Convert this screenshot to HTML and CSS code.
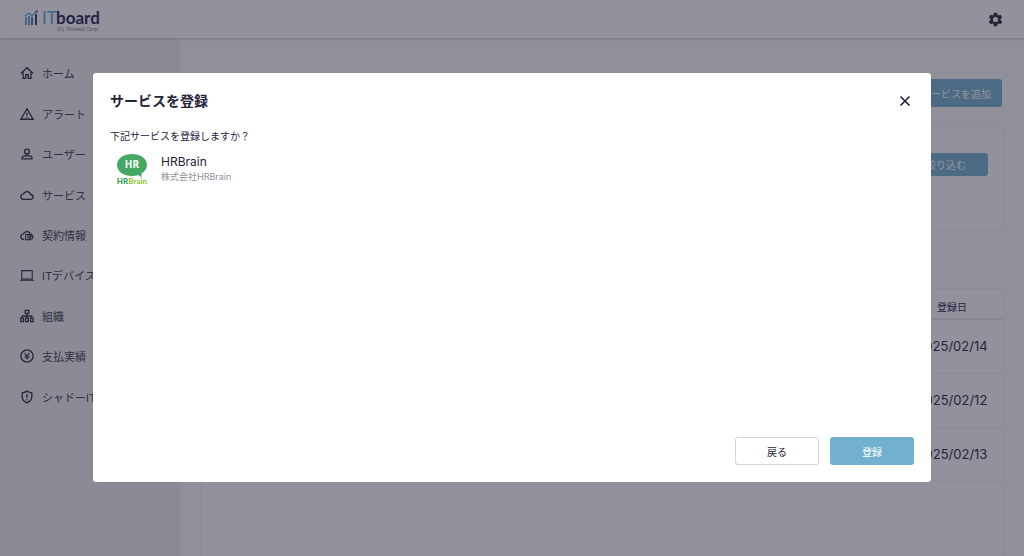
FILE: index.html
```html
<!DOCTYPE html>
<html lang="ja">
<head>
  <meta charset="UTF-8" />
  <meta name="viewport" content="width=device-width, initial-scale=1.0" />
  <title>ITboard</title>
  <link rel="stylesheet" href="styles.css">
</head>
<body>

  <header class="header">
    <a class="logo" href="#" aria-label="ITboard">
      <svg width="78" height="28" viewBox="0 0 78 28">
        <g fill="#5fa9cb">
          <rect x="1" y="12" width="2" height="8" />
          <rect x="4" y="11" width="2" height="9" />
        </g>
        <rect x="7" y="12" width="2" height="8" fill="#4d78ad" />
        <rect x="11" y="9" width="2" height="11" fill="#39377a" />
        <path d="M1 11l4-3 3 3 5-5" fill="none" stroke="#5fa9cb" stroke-width="1.3" />
        <circle cx="12.600" cy="6.500" r="1.200" fill="#4d78ad" />
        <text class="logo-it" x="18" y="19">IT</text>
        <text class="logo-board" x="32" y="19">board</text>
        <text class="logo-corp" x="33" y="26">(C)  ITcrowd Corp.</text>
      </svg>
    </a>
    <button class="icon-button" aria-label="設定">
      <svg width="17" height="17" viewBox="0 0 24 24" fill="currentColor">
        <path d="M19.14 12.94c.04-.3.06-.61.06-.94s-.02-.64-.07-.94l2.03-1.58a.49.49 0 0 0 .12-.61l-1.92-3.32a.49.49 0 0 0-.59-.22l-2.39.96a7 7 0 0 0-1.62-.94l-.36-2.54a.48.48 0 0 0-.48-.41h-3.84a.48.48 0 0 0-.47.41l-.36 2.54c-.59.24-1.13.57-1.62.94l-2.39-.96a.48.48 0 0 0-.59.22L2.74 8.87a.48.48 0 0 0 .12.61l2.03 1.58c-.05.3-.09.63-.09.94s.02.64.07.94l-2.03 1.58a.49.49 0 0 0-.12.61l1.92 3.32c.12.22.37.29.59.22l2.39-.96c.5.38 1.03.7 1.62.94l.36 2.54c.05.24.24.41.48.41h3.84c.24 0 .44-.17.47-.41l.36-2.54a7 7 0 0 0 1.62-.94l2.39.96c.22.08.47 0 .59-.22l1.92-3.32a.48.48 0 0 0-.12-.61zM12 15.600a3.600 3.600 0 1 1 0-7.200 3.600 3.600 0 0 1 0 7.200z" />
      </svg>
    </button>
  </header>

  <div class="layout">
    <nav class="sidebar">
      <ul class="menu">
        <li><a href="#">
          <svg viewBox="0 0 16 16"><path d="M1 8.500L8 2l7 6.500M3.500 7v7.200h3V10h3v4.200h3V7" /></svg>
          ホーム</a></li>
        <li><a href="#">
          <svg viewBox="0 0 16 16"><path d="M8 2l7 12H1zM8 6.500v3.500M8 11v1.500" /></svg>
          アラート</a></li>
        <li><a href="#">
          <svg viewBox="0 0 16 16"><circle cx="8" cy="5.200" r="2.800" /><path d="M2.300 13.500v-1c0-1.800 3-2.700 5.700-2.700s5.700.9 5.700 2.700v1z" /></svg>
          ユーザー</a></li>
        <li><a href="#">
          <svg viewBox="0 0 16 16"><path d="M4.200 13a3.100 3.100 0 0 1-.3-6.200 4.300 4.300 0 0 1 8.200.6A2.800 2.800 0 0 1 12.200 13z" /></svg>
          サービス</a></li>
        <li><a href="#">
          <svg viewBox="0 0 16 16"><path d="M5 13h-.8a3.100 3.100 0 0 1-.3-6.200 4.300 4.300 0 0 1 8.200.6A2.800 2.800 0 0 1 13.500 12.500" /><path class="thin" d="M6.500 7.500h6v6h-6zM8 9.500h1M8 11.500h1M10.300 7.500v6M11 9.500h1.500M11 11.500h1.500" /></svg>
          契約情報</a></li>
        <li><a href="#">
          <svg viewBox="0 0 16 16"><path class="thin" d="M2 3h12v9.500H2zM0 14h16" /></svg>
          ITデバイス</a></li>
        <li><a href="#">
          <svg viewBox="0 0 16 16"><path d="M6 1.500h4v3.500H6zM1 10.500h3v4H1zM6.500 10.500h3v4h-3zM12 10.500h3v4h-3zM8 5v5.500M2.500 10.500V8h11v2.500" /></svg>
          組織</a></li>
        <li><a href="#">
          <svg viewBox="0 0 16 16"><circle cx="8" cy="8" r="7" /><path class="thin" d="M5.200 4.500L8 8l2.800-3.500M8 8v4M5.300 8h5.400M5.300 10h5.400" /></svg>
          支払実績</a></li>
        <li><a href="#">
          <svg viewBox="0 0 16 16"><path d="M8 1.500l5.500 2v4c0 3.500-2.200 6-5.500 7.200-3.300-1.200-5.500-3.700-5.500-7.200v-4zM8 4.500v4.500M8 10.500v1.500" /></svg>
          シャドーIT</a></li>
      </ul>
    </nav>

    <main class="main">
      <button class="btn btn-primary btn-add">サービスを追加</button>

      <section class="card filter">
        <button class="btn btn-primary btn-filter">絞り込む</button>
      </section>

      <section class="card list">
        <table class="table">
          <thead>
            <tr><td></td><th class="col-date">登録日</th></tr>
          </thead>
          <tbody>
            <tr><td></td><td>2025/02/14</td></tr>
            <tr><td></td><td>2025/02/12</td></tr>
            <tr><td></td><td>2025/02/13</td></tr>
          </tbody>
        </table>
      </section>
    </main>
  </div>

  <div class="overlay">
    <div class="modal" role="dialog" aria-modal="true" aria-labelledby="modal-title">
      <div class="modal-header">
        <h2 id="modal-title">サービスを登録</h2>
        <button class="icon-button" aria-label="閉じる">
          <svg width="18" height="18" viewBox="0 0 18 18" fill="none" stroke="currentColor" stroke-width="1.7">
            <path d="M4.500 4.500l9 9M13.500 4.500l-9 9" />
          </svg>
        </button>
      </div>

      <p class="modal-text">下記サービスを登録しますか？</p>

      <div class="service">
        <svg class="service-logo" width="32" height="32" viewBox="0 0 32 32" role="img" aria-label="HRBrain">
          <path d="M16 0C7.500 0 1 4.600 1 11s6.500 11 15 11c2.300 0 4.500-.3 6.400-1 .8 1 2 1.900 3.600 2.200-.5-1-.7-2.200-.4-3.700C29 17.500 31 14.500 31 11 31 4.600 24.500 0 16 0z" fill="#47a764" />
          <text class="logo-hr" x="16" y="14" text-anchor="middle">HR</text>
          <text class="logo-name" x="16" y="30" text-anchor="middle"><tspan fill="#2f9e58">HR</tspan><tspan fill="#93c840">Brain</tspan></text>
        </svg>
        <div>
          <div class="service-name">HRBrain</div>
          <div class="service-company">株式会社HRBrain</div>
        </div>
      </div>

      <div class="modal-footer">
        <button class="btn btn-outline">戻る</button>
        <button class="btn btn-primary">登録</button>
      </div>
    </div>
  </div>

</body>
</html>
```

FILE: styles.css
```css
* {
  box-sizing: border-box;
}

body {
  margin: 0;
  height: 100vh;
  display: flex;
  flex-direction: column;
  overflow: hidden;
  color: #262439;
  background-color: #fafafa;
  font-family: Inter, 'Noto Sans CJK JP', sans-serif;
  font-size: 12px;
}

button {
  font-family: inherit;
  cursor: pointer;
}

svg {
  display: block;
  overflow: visible;
}

/* header */
.header {
  display: flex;
  align-items: center;
  justify-content: space-between;
  height: 38px;
  padding: 0 20px 0 24px;
  background-color: #fff;
  box-shadow: 0 1px 3px rgba(0, 0, 0, 0.2);
  z-index: 1;
}

.logo-it,
.logo-board {
  font-family: Lato, sans-serif;
  font-size: 17px;
}

.logo-it {
  fill: #5fa9cb;
}

.logo-board {
  fill: #262450;
  font-weight: bold;
}

.logo-corp {
  fill: #777;
  font-size: 5px;
}

.icon-button {
  padding: 0;
  border: none;
  background: none;
  color: inherit;
}

/* layout */
.layout {
  flex: 1;
  display: flex;
  min-height: 0;
}

.sidebar {
  width: 180px;
  padding-top: 15px;
  background-color: #f0f0f0;
}

.menu {
  display: grid;
  grid-auto-rows: 1fr;
  min-height: 364px;
  margin: 0;
  padding: 0;
  list-style: none;
}

.menu a {
  display: flex;
  align-items: center;
  gap: 8px;
  height: 100%;
  padding-left: 20px;
  color: #3c3a4c;
  font-size: 11px;
  text-decoration: none;
}

.menu svg {
  width: 14px;
  height: 14px;
  fill: none;
  stroke: #262439;
  stroke-width: 1.5;
}

.menu .thin {
  stroke-width: 1.2;
}

.main {
  flex: 1;
  display: flex;
  flex-direction: column;
  padding: 41px 22px 0;
}

.card {
  background-color: #fff;
  border-radius: 2px;
  box-shadow: 0 0 2px rgba(0, 0, 0, 0.12);
}

.filter {
  height: 102px;
  margin: 21px 0 59px;
  padding: 25px 14px;
  text-align: right;
}

.list {
  flex: 1;
}

/* buttons */
.btn {
  width: 84px;
  height: 28px;
  padding: 0;
  border: none;
  border-radius: 3px;
  font-size: 10px;
}

.btn-primary {
  background-color: #72b1cd;
  color: #fff;
}

.btn-outline {
  background-color: #fff;
  border: 1px solid #d5d5da;
  color: #262439;
}

.btn-add {
  align-self: flex-end;
  width: 92px;
}

.btn-filter {
  height: 23px;
}

/* table */
.table {
  width: 100%;
  border-collapse: collapse;
  text-align: center;
}

.table th,
.table td {
  height: 54px;
  padding: 0;
  border-bottom: 1px solid #f0f0f0;
  font-size: 13px;
}

.table thead th,
.table thead td {
  height: 30px;
  padding-top: 6px;
  border-bottom: 2px solid #e6e6e6;
  font-size: 10px;
  font-weight: normal;
}

.col-date {
  width: 100px;
}

/* modal */
.overlay {
  position: fixed;
  inset: 0;
  z-index: 10;
  display: flex;
  padding: 73px 93px 74px;
  background-color: rgba(38, 36, 57, 0.5);
}

.modal {
  flex: 1;
  display: flex;
  flex-direction: column;
  padding: 17px;
  background-color: #fff;
  border-radius: 3px;
}

.modal-header {
  display: flex;
  align-items: center;
  justify-content: space-between;
  height: 22px;
}

.modal-header h2 {
  margin: 0;
  font-size: 14px;
  font-weight: bold;
  line-height: 20px;
}

.modal-text {
  margin: 16px 0 10px;
  font-size: 10px;
  line-height: 16px;
}

.service {
  display: flex;
  gap: 13px;
  padding-left: 6px;
}

.logo-hr {
  font-family: 'Open Sans', sans-serif;
  font-size: 10px;
  font-weight: bold;
  fill: #fff;
}

.logo-name {
  font-family: Lato, sans-serif;
  font-size: 8px;
  font-weight: 900;
}

.service-name {
  font-size: 12px;
  line-height: 16px;
}

.service-company {
  color: #92919c;
  font-size: 9px;
  line-height: 14px;
}

.modal-footer {
  display: flex;
  justify-content: flex-end;
  gap: 11px;
  margin-top: auto;
}
```
